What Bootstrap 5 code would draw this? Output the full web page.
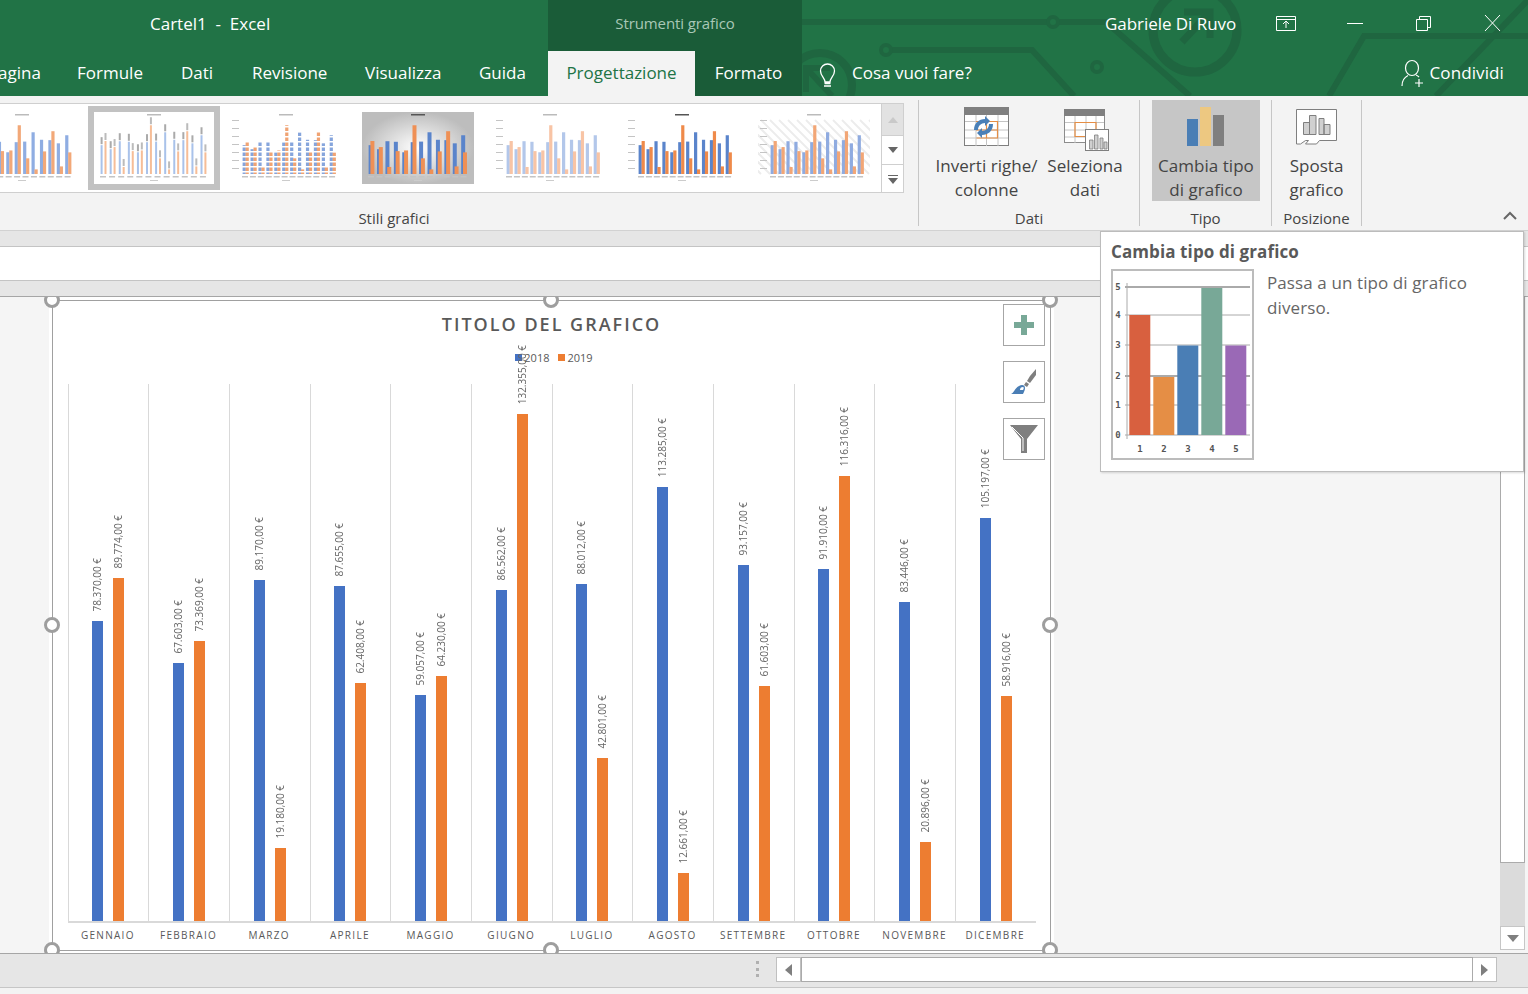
<!DOCTYPE html>
<html lang="it">
<head>
  <meta charset="UTF-8">
  <title>Cartel1 - Excel</title>
  <link href="https://cdn.jsdelivr.net/npm/bootstrap@5.3.0/dist/css/bootstrap.min.css" rel="stylesheet">
  <style>
    html, body { height: 994px; overflow: hidden; }
    body { font-family: "Open Sans", "Noto Sans", sans-serif; background: #f3f3f3; color: #444; position: relative; }
    /* barra titolo e schede */
    .xl-head { height: 96px; background: #217346; color: #fff; position: relative; overflow: hidden; }
    .xl-circuit { position: absolute; left: 0; top: 0; }
    .xl-titlerow { height: 51px; position: relative; }
    .xl-docname { width: 548px; padding-left: 150px; font-size: 17px; padding-top: 11px; white-space: pre; }
    .xl-context { width: 254px; background: #1a5c38; color: #a9c8b6; font-size: 15px; text-align: center; padding-top: 12px; letter-spacing: -.1px; }
    .xl-user { position: absolute; left: 1105px; top: 11px; font-size: 17px; letter-spacing: -.05px; }
    .xl-winbtn { position: absolute; top: 14px; }
    .xl-tabrow { height: 45px; position: relative; font-size: 17px; }
    .xl-tab { padding: 9px 0 0; }
    .xl-tab-on { width: 147px; background: #f3f3f3; color: #217346; text-align: center; }
    .xl-tab-dark { width: 107px; background: #1a5c38; text-align: center; }
    .xl-tell { margin-left: -1px; padding-top: 9px; }
    .xl-share { margin-left: auto; padding: 9px 24px 0 0; }
    /* barra multifunzione */
    .xl-ribbon { height: 135px; background: #f3f3f3; border-bottom: 1px solid #d2d2d2; padding-top: 4px; color: #444; }
    .rb-group { height: 126px; border-right: 1px solid #c6c6c6; flex: none; }
    .rb-label { font-size: 15px; text-align: center; line-height: 20px; margin-top: auto; margin-bottom: -2px; color: #444; }
    .rb-btn { height: 101px; flex: none; text-align: center; font-size: 17px; line-height: 24px; letter-spacing: .03px; color: #444; white-space: nowrap; }
    .rb-btn svg { display: block; margin: 0 auto; }
    .rb-btn-on { background: #c6c6c6; }
    .rb-styles { width: 919px; }
    .rb-gallery { height: 90px; margin-top: 3px; width: 904px; }
    .rb-strip { width: 881px; background: #fff; border-top: 1px solid #cfcfcf; border-bottom: 1px solid #cfcfcf; overflow: hidden; padding-top: 2px; }
    .rb-thumb { width: 132px; height: 84px; flex: none; }
    .rb-thumb:first-child { margin-left: -44px; }
    .rb-thumb svg { display: block; filter: blur(.6px); }
    .rb-thumb-on { border: 6px solid #c2c2c2; }
    .rb-spin { width: 23px; border: 1px solid #cfcfcf; background: #fff; }
    .rb-spin div { height: 29px; border-bottom: 1px solid #cfcfcf; }
    .rb-spin div:first-child { background: #e2e2e2; height: 32px; }
    .rb-spin div:last-child { border-bottom: 0; }
    .rb-collapse { margin-left: 141px; margin-top: 111px; }
    /* strisce sotto la barra */
    .xl-strip { height: 16px; background: #e6e6e6; border-bottom: 1px solid #c4c4c4; }
    .xl-formula { height: 34px; background: #fff; border-bottom: 1px solid #c4c4c4; }
    .xl-strip2 { height: 16px; background: #e6e6e6; border-bottom: 1px solid #a6a6a6; }
    /* foglio */
    .xl-sheet { height: 656px; background: #f5f5f5; overflow: hidden; }
    .xl-chartbox { width: 1005px; margin-left: 49px; background: #fff; padding: 3px; position: relative; flex: none; }
    .ct-frame { width: 999px; height: 651px; border: 1px solid #a0a0a0; padding: 0 14.5px; }
    .ct-title { font-size: 18px; font-weight: 600; letter-spacing: 2px; color: #595959; text-align: center; line-height: 24px; padding-top: 11px; height: 40px; }
    .ct-legend { height: 44px; padding-top: 9px; font-size: 11px; color: #595959; line-height: 16px; padding-left: 5px; }
    .ct-legend > span { height: 16px; }
    .ct-swatch { width: 7px; height: 7px; display: inline-block; margin-right: 2px; }
    .ct-plot { height: 539px; border-bottom: 2px solid #d9d9d9; }
    .ct-cat { flex: 1 1 0; border-left: 1px solid #d9d9d9; gap: 10px; }
    .ct-series { width: 11px; }
    .ct-value { writing-mode: vertical-rl; transform: rotate(180deg); font-size: 10px; line-height: 11px; color: #666; white-space: nowrap; margin-bottom: 10px; flex: none; }
    .ct-bar { width: 11px; flex: none; }
    .ct-axis { height: 27px; }
    .ct-axis div { flex: 1 1 0; text-align: center; font-size: 10px; letter-spacing: 1.3px; color: #595959; padding-top: 5px; white-space: nowrap; }
    .ct-handle { position: absolute; width: 16px; height: 16px; border: 3px solid #9e9e9e; border-radius: 50%; background: #fff; }
    .ct-tool { position: absolute; left: 954px; width: 42px; height: 42px; background: #fff; border: 1px solid #a6a6a6; }
    .xl-vscroll { width: 25px; margin-left: auto; margin-right: 3px; background: #dbdbdb; flex: none; height: 653px; }
    .xl-vthumb { height: 566px; background: #fff; border: 1px solid #ababab; border-top: 0; }
    .xl-vdown { height: 24px; margin-top: 63px; background: #fff; border: 1px solid #c6c6c6; }
    /* barra in basso */
    .xl-bottom { height: 35px; background: #e6e6e6; border-top: 1px solid #a6a6a6; border-bottom: 1px solid #c6c6c6; padding-top: 3px; }
    .xl-grip { width: 3px; margin-left: 756px; margin-top: 4px; height: 16px; border-left: 3px dotted #b0b0b0; }
    .xl-hleft { width: 25px; height: 25px; margin-left: 17px; background: #fff; border: 1px solid #c0c0c0; }
    .xl-hthumb { width: 672px; height: 25px; background: #fff; border: 1px solid #ababab; }
    .xl-hright { width: 24px; height: 25px; background: #fff; border: 1px solid #c0c0c0; border-left: 0; }
    /* suggerimento */
    .xl-tip { position: absolute; left: 1100px; top: 231px; width: 424px; height: 241px; background: #fff; border: 1px solid #bcbcbc; box-shadow: 1px 1px 2px rgba(0,0,0,.15); padding: 8px 10px; color: #666; }
    .xl-tip-title { font-size: 17px; font-weight: 700; color: #595959; line-height: 23px; letter-spacing: .1px; }
    .xl-tip-chart { border: 2px solid #bcbcbc; flex: none; }
    .xl-tip-text { font-size: 17px; line-height: 25px; padding: 1px 0 0 13px; letter-spacing: .1px; }
  </style>
</head>
<body>
  <header class="xl-head">
    <svg class="xl-circuit" width="1528" height="96" fill="none" stroke="#1f6640" stroke-width="6">
      <path d="M802 22H1048M1058 22H1106L1190 96"/>
      <circle cx="1053" cy="22" r="5" stroke-width="4"/>
      <circle cx="790" cy="22" r="5" stroke="#1b5335" stroke-width="4"/>
      <path d="M891 50H1032L1074 96" />
      <circle cx="886" cy="50" r="5" stroke-width="4"/>
      <circle cx="1097" cy="67" r="5" stroke-width="4"/>
      <circle cx="1195" cy="30" r="42" stroke-width="9"/>
      <path d="M1182 42L1208 14M1184 12H1210V38" stroke-width="7"/>
      <circle cx="820" cy="85" r="32" stroke-width="8"/>
      <path d="M808 70L832 96M806 92V68H830" stroke-width="6"/>
      <path d="M1329 96L1364 36H1528M1436 96L1528 0" stroke-width="6"/>
    </svg>
    <div class="xl-titlerow d-flex">
      <div class="xl-docname">Cartel1  -  Excel</div>
      <div class="xl-context">Strumenti grafico</div>
      <div class="xl-user">Gabriele Di Ruvo</div>
      <svg class="xl-winbtn" style="left:1276px" width="20" height="18" fill="none" stroke="#fff"><path d="M.5 2.500h19v14H.5zM.5 5.500h19M10 14V7.500M7 10l3-3 3 3"/></svg>
      <svg class="xl-winbtn" style="left:1347px" width="16" height="18" fill="none" stroke="#fff"><path d="M0 9.500h16"/></svg>
      <svg class="xl-winbtn" style="left:1416px" width="16" height="18" fill="none" stroke="#fff"><path d="M.5 5.500h11v11H.5zM3.500 5.500v-3h11v11h-3"/></svg>
      <svg class="xl-winbtn" style="left:1484px" width="17" height="18" fill="none" stroke="#fff"><path d="M1 1l15 16M16 1L1 17"/></svg>
    </div>
    <div class="xl-tabrow d-flex">
      <div class="xl-tab" style="width:77px;text-indent:-2px">agina</div>
      <div class="xl-tab" style="width:104px">Formule</div>
      <div class="xl-tab" style="width:71px">Dati</div>
      <div class="xl-tab" style="width:113px">Revisione</div>
      <div class="xl-tab" style="width:114px">Visualizza</div>
      <div class="xl-tab" style="width:69px">Guida</div>
      <div class="xl-tab xl-tab-on">Progettazione</div>
      <div class="xl-tab xl-tab-dark">Formato</div>
      <svg width="35" height="36" fill="none" stroke="#fff" stroke-width="1.300" style="margin:9px 0 0 16px"><path d="M6 26h7M6.500 23.500h6M7 22c0-4-4.500-6-4.500-11a7 7 0 0 1 14 0c0 5-4.500 7-4.500 11z"/></svg>
      <div class="xl-tell">Cosa vuoi fare?</div>
      <div class="xl-share d-flex gap-2">
        <svg width="24" height="28" fill="none" stroke="#fff" stroke-width="1.200" style="margin-top:-1px"><ellipse cx="11" cy="9" rx="6.500" ry="7.500"/><path d="M1 27c0-6 3-9 6-10.500M15 16c1 .4 2 1 3 2M18 20v8M14 24h8"/></svg>
        <span style="margin-left:-3px;letter-spacing:.1px">Condividi</span>
      </div>
    </div>
  </header>

  <section class="xl-ribbon d-flex">
    <div class="rb-group rb-styles d-flex flex-column">
      <div class="rb-gallery d-flex">
        <div class="rb-strip d-flex" id="thumbs"></div>
        <div class="rb-spin">
          <div class="d-flex align-items-center justify-content-center"><svg width="10" height="6"><path d="M0 6L5 0l5 6z" fill="#c9c9c9"/></svg></div>
          <div class="d-flex align-items-center justify-content-center"><svg width="10" height="6"><path d="M0 0l5 6 5-6z" fill="#666"/></svg></div>
          <div class="d-flex align-items-center justify-content-center"><svg width="10" height="9"><path d="M0 0h10v1H0zM0 3l5 6 5-6z" fill="#666"/></svg></div>
        </div>
      </div>
      <div class="rb-label" style="padding-right:130px">Stili grafici</div>
    </div>

    <div class="rb-group d-flex flex-column" style="width:221px">
      <div class="d-flex" style="padding-left:15px">
        <div class="rb-btn" style="width:105px">
          <svg width="105" height="54" viewBox="934 100 105 54" fill="none">
            <rect x="964.500" y="107.500" width="44" height="38" fill="#fff" stroke="#7f7f7f"/>
            <rect x="964" y="107" width="45" height="8" fill="#7f7f7f"/>
            <path d="M976 115v31M986.500 115v31M998 115v31M965 121.500h43M965 138h43M965 130h43" stroke="#c4c4c4"/>
            <path d="M976 121.500h21.500v16.500h-21M986.500 121.500v16.500M976 130h21.500" stroke="#e58e45" stroke-width="1.200"/>
            <path d="M974 130c0-7 5-11 11-11v-3l5 5-5 5v-3c-4 0-7 3-7 7z" fill="#4a80b8"/>
            <path d="M993 124c0 7-5 11-11 11v3l-5-5 5-5v3c4 0 7-3 7-7z" fill="#4a80b8"/>
          </svg>
          Inverti righe/<br>colonne
        </div>
        <div class="rb-btn" style="width:92px">
          <svg width="92" height="54" viewBox="1039 100 92 54" fill="none">
            <rect x="1064.500" y="109.500" width="40" height="33" fill="#fff" stroke="#8c8c8c"/>
            <rect x="1064" y="109" width="41" height="7" fill="#7f7f7f"/>
            <path d="M1075 116v27M1086 116v27M1096 116v27M1065 122.500h39M1065 130h39M1065 137h39" stroke="#c4c4c4"/>
            <path d="M1075 136.500v-14h21v14z" stroke="#e58e45" stroke-width="1.200"/>
            <rect x="1085.500" y="129.500" width="23" height="21" fill="#fff" stroke="#7f7f7f"/>
            <path d="M1089.500 149v-9h3.500v9zM1094.500 149v-14h3.500v14zM1100 149v-11h3v11zM1104 149v-7h3v7z" fill="#d0d0d0" stroke="#7f7f7f" stroke-width=".8"/>
          </svg>
          Seleziona<br>dati
        </div>
      </div>
      <div class="rb-label">Dati</div>
    </div>

    <div class="rb-group d-flex flex-column" style="width:132px">
      <div class="rb-btn rb-btn-on" style="width:108px;margin-left:12px">
        <svg width="108" height="54" viewBox="1152 100 108 54">
          <rect x="1187" y="119" width="11" height="27" fill="#4a7eb5"/>
          <rect x="1200" y="107" width="11" height="39" fill="#edc881"/>
          <rect x="1213" y="115" width="11" height="31" fill="#7f7f7f"/>
        </svg>
        Cambia tipo<br>di grafico
      </div>
      <div class="rb-label">Tipo</div>
    </div>

    <div class="rb-group d-flex flex-column" style="width:90px">
      <div class="rb-btn">
        <svg width="89" height="54" viewBox="1272 100 89 54" fill="none">
          <path d="M1296.500 109.500h40v31h-17l-3 3.500h-11l3-3.500h-3l-5 3.500h-4z" fill="#fff" stroke="#7f7f7f"/>
          <path d="M1303.500 134.500v-12h6v12zM1309.500 134.500v-19h6.500v19zM1319 134.500v-16h5v16zM1324 134.500v-10h6v10z" fill="#d0d0d0" stroke="#7f7f7f"/>
        </svg>
        Sposta<br>grafico
      </div>
      <div class="rb-label">Posizione</div>
    </div>

    <svg class="rb-collapse" width="14" height="9" fill="none" stroke="#666" stroke-width="2"><path d="M1 8l6-6 6 6"/></svg>
  </section>

  <div class="xl-strip"></div>
  <div class="xl-formula"></div>
  <div class="xl-strip2"></div>

  <main class="xl-sheet d-flex">
    <div class="xl-chartbox">
      <div class="ct-frame d-flex flex-column">
        <div class="ct-title">TITOLO DEL GRAFICO</div>
        <div class="ct-legend d-flex justify-content-center">
          <span class="d-flex align-items-center me-2"><span class="ct-swatch" style="background:#4472c4"></span>2018</span>
          <span class="d-flex align-items-center"><span class="ct-swatch" style="background:#ed7d31;margin-right:3px"></span>2019</span>
        </div>
        <div class="ct-plot d-flex" id="plot"></div>
        <div class="ct-axis d-flex" id="axis"></div>
      </div>
      <!-- maniglie di selezione -->
      <span class="ct-handle" style="left:-5px;top:-5px"></span>
      <span class="ct-handle" style="left:494px;top:-5px"></span>
      <span class="ct-handle" style="left:993px;top:-5px"></span>
      <span class="ct-handle" style="left:-5px;top:320px"></span>
      <span class="ct-handle" style="left:993px;top:320px"></span>
      <span class="ct-handle" style="left:-5px;top:645px"></span>
      <span class="ct-handle" style="left:494px;top:645px"></span>
      <span class="ct-handle" style="left:993px;top:645px"></span>
      <!-- pulsanti del grafico -->
      <div class="ct-tool d-flex align-items-center justify-content-center" style="top:7px">
        <svg width="20" height="20"><path d="M7 0h6v7h7v6h-7v7H7v-7H0V7h7z" fill="#78a897"/></svg>
      </div>
      <div class="ct-tool d-flex align-items-center justify-content-center" style="top:64px">
        <svg width="26" height="26"><path d="M25 0v6l-6 8-3-2 3-5zM15 13l3 2-2 3-3-2z" fill="#7f7f7f"/><path d="M0 25c3-1 4-6 8-8 3-2 6-1 6 2 0 2-1 4-2 6z" fill="#4a7eb5"/><path d="M9 21c0-2 1-3 3-3 1 0 1 2 0 3z" fill="#fff"/></svg>
      </div>
      <div class="ct-tool d-flex align-items-center justify-content-center" style="top:121px">
        <svg width="30" height="28"><path d="M1 0h28L18 14v14h-6V14z" fill="#7f7f7f"/><path d="M3 2l11 11v13" fill="none" stroke="#fff"/></svg>
      </div>
    </div>
    <div class="xl-vscroll">
      <div class="xl-vthumb"></div>
      <div class="xl-vdown d-flex align-items-center justify-content-center"><svg width="12" height="7"><path d="M0 0h12L6 7z" fill="#7f7f7f"/></svg></div>
    </div>
  </main>

  <footer class="xl-bottom d-flex">
    <div class="xl-grip"></div>
    <div class="xl-hleft d-flex align-items-center justify-content-center"><svg width="7" height="12"><path d="M7 0v12L0 6z" fill="#7f7f7f"/></svg></div>
    <div class="xl-hthumb"></div>
    <div class="xl-hright d-flex align-items-center justify-content-center"><svg width="7" height="12"><path d="M0 0v12l7-6z" fill="#7f7f7f"/></svg></div>
  </footer>

  <aside class="xl-tip">
    <div class="xl-tip-title">Cambia tipo di grafico</div>
    <div class="d-flex mt-1" style="padding-top:2px">
      <svg class="xl-tip-chart" width="143" height="191" viewBox="2 2 139 187" font-family="DejaVu Sans Mono, monospace" font-size="9" font-weight="700" fill="#555" text-anchor="middle">
        <path d="M14 18h125M14 46h125M14 76h125M14 107h125M14 136h125M14 166h125M16 14v156" stroke="#aaa" stroke-width="1" fill="none"/>
        <path d="M14 18h125M14 107h125" stroke="#aaa" stroke-width="2" fill="none"/>
        <rect x="18.300" y="46" width="21" height="120" fill="#d8603f"/>
        <rect x="42.300" y="108" width="21" height="58" fill="#e58e45"/>
        <rect x="66.300" y="76.500" width="21" height="89.500" fill="#4a7eb5"/>
        <rect x="90.300" y="19" width="21" height="147" fill="#78a897"/>
        <rect x="114.300" y="76.500" width="21" height="89.500" fill="#9a69b6"/>
        <text x="7" y="21">5</text><text x="7" y="49">4</text><text x="7" y="79">3</text><text x="7" y="110">2</text><text x="7" y="139">1</text><text x="7" y="169">0</text>
        <text x="29" y="183">1</text><text x="53" y="183">2</text><text x="77" y="183">3</text><text x="101" y="183">4</text><text x="125" y="183">5</text>
      </svg>
      <div class="xl-tip-text">Passa a un tipo di grafico<br>diverso.</div>
    </div>
  </aside>

  <script src="https://cdn.jsdelivr.net/npm/bootstrap@5.3.0/dist/js/bootstrap.bundle.min.js"></script>
  <script>
    // dati del grafico: pixel di altezza presi dal valore (3.83 px ogni 1000)
    const months = [
      ['GENNAIO', '78.370,00 €', '89.774,00 €', 300, 343],
      ['FEBBRAIO', '67.603,00 €', '73.369,00 €', 258, 280],
      ['MARZO', '89.170,00 €', '19.180,00 €', 341, 73],
      ['APRILE', '87.655,00 €', '62.408,00 €', 335, 238],
      ['MAGGIO', '59.057,00 €', '64.230,00 €', 226, 245],
      ['GIUGNO', '86.562,00 €', '132.355,00 €', 331, 507],
      ['LUGLIO', '88.012,00 €', '42.801,00 €', 337, 163],
      ['AGOSTO', '113.285,00 €', '12.661,00 €', 434, 48],
      ['SETTEMBRE', '93.157,00 €', '61.603,00 €', 356, 235],
      ['OTTOBRE', '91.910,00 €', '116.316,00 €', 352, 445],
      ['NOVEMBRE', '83.446,00 €', '20.896,00 €', 319, 79],
      ['DICEMBRE', '105.197,00 €', '58.916,00 €', 403, 225]
    ];

    const plot = document.getElementById('plot');
    const axis = document.getElementById('axis');
    months.forEach(m => {
      plot.insertAdjacentHTML('beforeend', `
        <div class="ct-cat d-flex justify-content-center align-items-end">
          <div class="ct-series d-flex flex-column align-items-center justify-content-end">
            <span class="ct-value">${m[1]}</span><div class="ct-bar" style="height:${m[3]}px;background:#4472c4"></div>
          </div>
          <div class="ct-series d-flex flex-column align-items-center justify-content-end">
            <span class="ct-value">${m[2]}</span><div class="ct-bar" style="height:${m[4]}px;background:#ed7d31"></div>
          </div>
        </div>`);
      axis.insertAdjacentHTML('beforeend', `<div>${m[0]}</div>`);
    });

    // anteprime degli stili
    const styles = [
      { w: 112, blue: '#8fade2', orange: '#f2a878', title: 1 },
      { w: 120, blue: '#a9c2ea', orange: '#f6bd97', title: 1, thin: 1, notes: 1, on: 1 },
      { w: 112, blue: '#86a5dc', orange: '#f0a373', ticks: 1, title: 1, dash: 1 },
      { w: 112, blue: '#5a84cb', orange: '#ef9055', wide: 1, bg: 1, title: 2 },
      { w: 112, blue: '#b3c7ea', orange: '#f8c4a5', ticks: 1, title: 1 },
      { w: 112, blue: '#5a84cb', orange: '#ef8a4a', ticks: 1, title: 2 },
      { w: 112, blue: '#8fabe0', orange: '#f2a676', ticks: 1, title: 1, hatch: 1 }
    ];
    function thumbSvg(s, i) {
      const W = s.w, base = 62, left = s.ticks ? 12 : 6, step = (W - left - 5) / 12;
      let out = '';
      if (s.bg) out += `<rect width="${W}" height="72" fill="url(#g${i})"/>`;
      if (s.hatch) for (let x = -60; x < W; x += 9) out += `<path d="M${x} 8L${x + 54} 62" stroke="#ececec" stroke-width="2"/>`;
      out += `<rect x="${W / 2 - 7}" y="2" width="14" height="1.500" fill="${s.title === 2 ? '#555' : '#bbb'}"/>`;
      if (s.ticks) for (let y = 8; y < 62; y += 8) out += `<rect x="2" y="${y}" width="7" height="1" fill="#c4c4c4"/>`;
      months.forEach((m, k) => {
        const x = left + step * k, bw = s.thin ? 2 : 3.2;
        const hb = m[3] / 10.4, ho = m[4] / 10.4;
        const xo = x + (s.wide ? 2.4 : s.thin ? 4.5 : 3.6);
        out += `<rect x="${x + .6}" y="${base - hb}" width="${s.wide ? 4 : bw}" height="${hb}" fill="${s.blue}"/>`;
        out += `<rect x="${xo}" y="${base - ho}" width="${s.wide ? 4 : bw}" height="${ho}" fill="${s.orange}"/>`;
        if (s.dash) for (let y = 4; y < 60; y += 5) out += `<rect x="${x}" y="${y}" width="8" height="1.500" fill="#fff"/>`;
        if (s.notes) {
          out += `<rect x="${x + .6}" y="${base - hb - 8}" width="2" height="7" fill="#aaa"/>`;
          out += `<rect x="${xo}" y="${base - ho - 8}" width="2" height="7" fill="#bbb"/>`;
        }
        out += `<rect x="${x}" y="64" width="6" height="1.500" fill="#c4c4c4"/>`;
      });
      out += `<rect x="${W / 2 - 4}" y="68" width="8" height="1" fill="#ccc"/>`;
      const defs = s.bg ? `<defs><radialGradient id="g${i}"><stop offset="0" stop-color="#fff"/><stop offset="1" stop-color="#bdbdbd"/></radialGradient></defs>` : '';
      return `<svg width="${W}" height="72" viewBox="0 0 ${W} 72">${defs}${out}</svg>`;
    }
    const thumbs = document.getElementById('thumbs');
    styles.forEach((s, i) => {
      thumbs.insertAdjacentHTML('beforeend',
        `<div class="rb-thumb d-flex align-items-center justify-content-center ${s.on ? 'rb-thumb-on' : ''}">${thumbSvg(s, i)}</div>`);
    });
  </script>
</body>
</html>
